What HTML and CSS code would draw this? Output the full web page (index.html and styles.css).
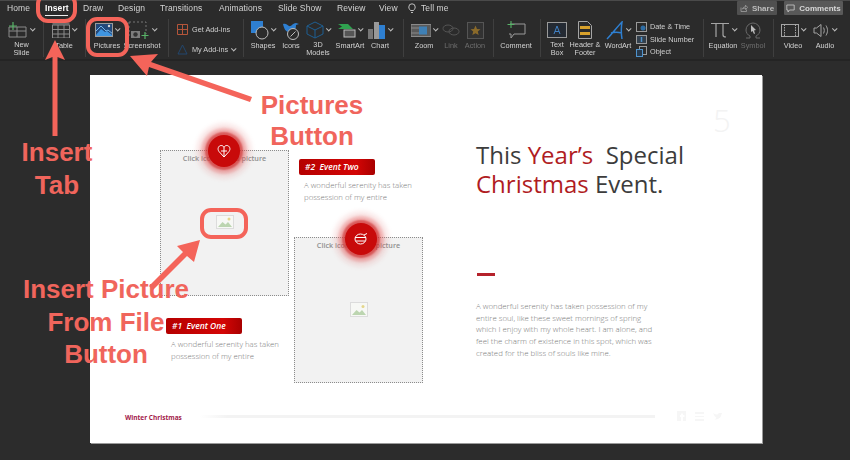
FILE: index.html
```html
<!DOCTYPE html>
<html lang="en">
<head>
<meta charset="utf-8">
<title>Insert picture in PowerPoint</title>
<link rel="stylesheet" href="styles.css">
</head>
<body>
<div class="app">
  <header class="tabs">
    <nav class="tab-list">
      <span class="tab t-home">Home</span>
      <span class="tab t-insert active">Insert</span>
      <span class="tab t-draw">Draw</span>
      <span class="tab t-design">Design</span>
      <span class="tab t-trans">Transitions</span>
      <span class="tab t-anim">Animations</span>
      <span class="tab t-show">Slide Show</span>
      <span class="tab t-review">Review</span>
      <span class="tab t-view">View</span>
      <span class="tab t-tell">
        <svg class="bulb" width="8" height="11" viewBox="0 0 8 11"><path d="M2.5 7.5C1.5 6.3.8 5.5.8 4a3.2 3.2 0 0 1 6.4 0c0 1.500-.7 2.300-1.700 3.500zM3 9.500h2" fill="none" stroke="#cfcfcf" stroke-width=".9"/></svg>
        Tell me
      </span>
    </nav>
    <div class="actions">
      <span class="action-btn share"><svg width="8" height="8" viewBox="0 0 8 8"><path d="M1 3.500v4h5.500v-2M2.500 5C3 3.500 4 2.800 5.500 2.800V1.200L7.700 3.400 5.500 5.500V4C4.300 4 3.300 4.300 2.500 5z" fill="none" stroke="#aaa" stroke-width=".7"/></svg>Share</span>
      <span class="action-btn comments"><svg width="9" height="9" viewBox="0 0 9 9"><path d="M.8 1h7.400v5H3.500L2 8V6H.8z" fill="none" stroke="#ccc" stroke-width=".8"/></svg>Comments</span>
    </div>
  </header>

  <section class="ribbon">
    <div class="group g1">
      <div class="tool w-new">
        <div class="ico"><svg width="20" height="16" viewBox="0 0 20 16"><path d="M1 5h17v10H1zM1 9h17M9 5v10" fill="none" stroke="#8b8b8b" stroke-width="1"/><path d="M5 0v8M1 4h8" stroke="#58b368" stroke-width="1.200"/></svg><i class="caret"></i></div>
        <div class="lbl">New<br>Slide</div>
      </div>
    </div>
    <div class="group g2">
      <div class="tool w-table">
        <div class="ico"><svg width="18" height="16" viewBox="0 0 18 16"><path d="M.5 3h17v13H.5zM.5 7.500h17M.5 12h17M6 3v13M12 3v13" fill="none" stroke="#8b8b8b"/><path d="M.5.500h17V3H.5z" fill="#6b6b6b"/></svg><i class="caret"></i></div>
        <div class="lbl">Table</div>
      </div>
    </div>
    <div class="group g3">
      <div class="tool w-pic">
        <div class="ico"><svg width="18" height="14" viewBox="0 0 18 14"><rect width="18" height="14" fill="#23497a"/><path d="M1 12l5-6 4 3 2-1 5 4v1H1z" fill="#3f95e0"/><path d="M0 9l6-6 5 5 2-1 5 4" fill="none" stroke="#74b6ee" stroke-width="1"/><circle cx="14" cy="3" r="1.200" fill="#d9d9d9"/><rect x=".5" y=".5" width="17" height="13" fill="none" stroke="#9a9a9a"/></svg><i class="caret"></i></div>
        <div class="lbl">Pictures</div>
      </div>
      <div class="tool w-shot">
        <div class="ico"><svg width="22" height="19" viewBox="0 0 22 19"><path d="M1 1h17v12" fill="none" stroke="#777" stroke-dasharray="2 2"/><path d="M1 1v15" stroke="#777" stroke-dasharray="2 2"/><path d="M3 10h9v7H3z" fill="#7d7d7d"/><circle cx="7.500" cy="13.500" r="2.200" fill="#333"/><path d="M17 11v7M13.500 14.500h7" stroke="#58b368" stroke-width="1.200"/></svg><i class="caret"></i></div>
        <div class="lbl">Screenshot</div>
      </div>
    </div>
    <div class="group g4">
      <div class="addins">
        <div class="addin"><svg width="11" height="11" viewBox="0 0 11 11"><path d="M.5.500h10v10H.5zM.5 5.500h10M5.500.500v10" fill="none" stroke="#b4553a"/></svg>Get Add-ins</div>
        <div class="addin"><svg width="11" height="11" viewBox="0 0 11 11"><path d="M5.500 1l4.500 9H1z" fill="none" stroke="#23476e"/></svg>My Add-ins<i class="caret small"></i></div>
      </div>
    </div>
    <div class="group g5">
      <div class="tool w-shapes">
        <div class="ico"><svg width="18" height="19" viewBox="0 0 18 19"><rect x="0" y="0" width="12" height="12" fill="#2e7fd1"/><circle cx="11" cy="12" r="6" fill="#2b2b2b" stroke="#bdbdbd"/></svg><i class="caret"></i></div>
        <div class="lbl">Shapes</div>
      </div>
      <div class="tool w-icons">
        <div class="ico"><svg width="18" height="19" viewBox="0 0 18 19"><path d="M1 3c3-1 4 1 6 2s4-3 7-3l3 1-3 1c0 5-2 7-7 7-3 0-5-3-6-8z" fill="#2e7fd1"/><circle cx="11" cy="13" r="5.500" fill="#2b2b2b" stroke="#bdbdbd"/><path d="M8.500 15.500l5-5" stroke="#bdbdbd"/></svg></div>
        <div class="lbl">Icons</div>
      </div>
      <div class="tool w-3d">
        <div class="ico"><svg width="18" height="18" viewBox="0 0 18 18"><path d="M9 1l8 4v8l-8 4-8-4V5zM1 5l8 4 8-4M9 9v8" fill="none" stroke="#1f5f92"/></svg><i class="caret"></i></div>
        <div class="lbl">3D<br>Models</div>
      </div>
      <div class="tool w-smart">
        <div class="ico"><svg width="19" height="15" viewBox="0 0 19 15"><path d="M1 1h10l5 5H1l4-2.500z" fill="#2fa24f"/><rect x="7" y="7" width="11" height="7" fill="#555" stroke="#bdbdbd"/></svg><i class="caret"></i></div>
        <div class="lbl">SmartArt</div>
      </div>
      <div class="tool w-chart">
        <div class="ico"><svg width="18" height="18" viewBox="0 0 18 18"><rect x="0" y="8" width="5" height="10" fill="#777"/><rect x="6" y="1" width="5" height="17" fill="#999"/><rect x="11" y="4" width="6" height="14" fill="#2e7fd1"/></svg><i class="caret"></i></div>
        <div class="lbl">Chart</div>
      </div>
    </div>
    <div class="group g6">
      <div class="tool w-zoom">
        <div class="ico"><svg width="20" height="13" viewBox="0 0 20 13"><rect x="0" y=".5" width="20" height="12" fill="#5a5a5a" stroke="#8a8a8a"/><rect x="8" y="2.500" width="8" height="8" fill="#3f80b5"/><path d="M0 4h8M0 9h8" stroke="#8a8a8a"/></svg><i class="caret"></i></div>
        <div class="lbl">Zoom</div>
      </div>
      <div class="tool w-link">
        <div class="ico"><svg width="18" height="12" viewBox="0 0 18 12"><ellipse cx="6" cy="4.500" rx="5" ry="3.500" fill="none" stroke="#555"/><ellipse cx="12" cy="7.500" rx="5" ry="3.500" fill="none" stroke="#555"/></svg></div>
        <div class="lbl dim">Link</div>
      </div>
      <div class="tool w-action">
        <div class="ico"><svg width="17" height="17" viewBox="0 0 17 17"><rect x=".5" y=".5" width="16" height="16" fill="#323232" stroke="#555"/><path d="M8.500 3.500l1.500 3.500 3.500.3-2.700 2.300.9 3.500-3.200-1.900-3.200 1.900.9-3.500L3.500 7.300 7 7z" fill="#8a6a2a"/></svg></div>
        <div class="lbl dim">Action</div>
      </div>
    </div>
    <div class="group g7">
      <div class="tool w-comment">
        <div class="ico"><svg width="20" height="18" viewBox="0 0 20 18"><path d="M4 3h15v10H8l-3 4v-4H3" fill="none" stroke="#9a9a9a"/><path d="M5 0v7M1.500 3.500h7" stroke="#58b368" stroke-width="1.100"/></svg></div>
        <div class="lbl">Comment</div>
      </div>
    </div>
    <div class="group g8">
      <div class="tool w-text">
        <div class="ico"><svg width="20" height="16" viewBox="0 0 20 16"><rect x=".5" y=".5" width="19" height="15" fill="#242a33" stroke="#9a9a9a"/><path d="M7 12l3-8 3 8M8 9.500h4" fill="none" stroke="#3f80c5"/></svg></div>
        <div class="lbl">Text<br>Box</div>
      </div>
      <div class="tool w-header">
        <div class="ico"><svg width="14" height="18" viewBox="0 0 14 18"><path d="M.5.500h9l4 4v13H.500z" fill="#2b2b2b" stroke="#a5a5a5"/><rect x="2" y="5" width="10" height="3" fill="#d8a12b"/><rect x="2" y="11" width="10" height="3" fill="#d8a12b"/></svg></div>
        <div class="lbl">Header &amp;<br>Footer</div>
      </div>
      <div class="tool w-word">
        <div class="ico"><svg width="18" height="19" viewBox="0 0 18 19"><path d="M1 18C6 13 11 6 16 1c-1 6-1 11 0 17M5 12c3-1 7-1 11 0" fill="none" stroke="#2e7fd1" stroke-width="1.500"/></svg><i class="caret"></i></div>
        <div class="lbl">WordArt</div>
      </div>
      <div class="stack">
        <div class="stack-row"><svg width="11" height="11" viewBox="0 0 11 11"><rect x=".5" y="1.500" width="10" height="9" fill="none" stroke="#9a9a9a"/><circle cx="7" cy="7" r="2.500" fill="#2e6da5"/></svg>Date &amp; Time</div>
        <div class="stack-row"><svg width="11" height="9" viewBox="0 0 11 9"><rect x=".5" y=".5" width="10" height="8" fill="#33404d" stroke="#9a9a9a"/><path d="M5.500 2v5" stroke="#4f93cc" stroke-width="1.500"/></svg>Slide Number</div>
        <div class="stack-row"><svg width="11" height="11" viewBox="0 0 11 11"><rect x="3.500" y=".5" width="7" height="8" fill="none" stroke="#9a9a9a"/><rect x=".5" y="3.500" width="6" height="7" fill="#27394c" stroke="#4f93cc"/></svg>Object</div>
      </div>
    </div>
    <div class="group g9">
      <div class="tool w-eq">
        <div class="ico"><svg width="20" height="16" viewBox="0 0 20 16"><path d="M1 1.500h18M6 1.500V15M13 1.500V13c0 1.500 1 2 3 2" fill="none" stroke="#a5a5a5" stroke-width="1.200"/></svg><i class="caret"></i></div>
        <div class="lbl">Equation</div>
      </div>
      <div class="tool w-sym">
        <div class="ico"><svg width="16" height="17" viewBox="0 0 16 17"><path d="M1 16h4v-2C2.500 13 1 10.500 1 8a7 7 0 0 1 14 0c0 2.500-1.500 5-4 6v2h4" fill="none" stroke="#6a6a6a"/><path d="M6 3l5 5-2 .5 1 3-1 .5-1.500-3L6 10z" fill="#bbb"/></svg></div>
        <div class="lbl dim">Symbol</div>
      </div>
    </div>
    <div class="group g10">
      <div class="tool w-video">
        <div class="ico"><svg width="18" height="13" viewBox="0 0 18 13"><rect x=".5" y=".5" width="17" height="12" fill="none" stroke="#a5a5a5"/><path d="M3.500.5v12M14.500.5v12" stroke="#a5a5a5" stroke-dasharray="1.500 1"/></svg><i class="caret"></i></div>
        <div class="lbl">Video</div>
      </div>
      <div class="tool w-audio">
        <div class="ico"><svg width="17" height="15" viewBox="0 0 17 15"><path d="M1 5v5h2.500L8 13.500v-12L3.500 5z" fill="none" stroke="#a5a5a5"/><path d="M10.500 4.500c1 2 1 4 0 6M13 2.500c2 3.500 2 6.500 0 10" fill="none" stroke="#a5a5a5"/></svg><i class="caret"></i></div>
        <div class="lbl">Audio</div>
      </div>
    </div>
  </section>

  <main class="stage">
    <article class="slide">
      <div class="ph ph-one">
        <p class="ph-text">Click icon to add picture</p>
        <svg class="ph-ico" width="18" height="14" viewBox="0 0 18 14"><rect x=".5" y=".5" width="17" height="13" fill="#f7f8f5" stroke="#dcdcdc"/><path d="M2 12l4.500-5 3 2.500L12 7l4 5z" fill="#bcd5b0"/><circle cx="13" cy="4" r="1.500" fill="#e4d68c"/></svg>
      </div>
      <div class="ph ph-two">
        <p class="ph-text">Click icon to add picture</p>
        <svg class="ph-ico" width="18" height="15" viewBox="0 0 18 15"><rect x=".5" y=".5" width="17" height="14" fill="#f7f8f5" stroke="#dcdcdc"/><path d="M2 13l4.500-5 3 2.500L12 8l4 5z" fill="#bcd5b0"/><circle cx="13" cy="4.500" r="1.500" fill="#e4d68c"/></svg>
      </div>

      <div class="badge badge-one"><svg width="16" height="16" viewBox="0 0 16 16"><path d="M8 14L3 8.500C1 6 2.500 2.500 5.200 2.500 6.700 2.500 7.600 3.300 8 4.500 8.400 3.300 9.300 2.500 10.800 2.500 13.500 2.500 15 6 13 8.500zM8 4.500V14M5 8h6" fill="none" stroke="#fff" stroke-width="1"/></svg></div>
      <div class="badge badge-two"><svg width="16" height="16" viewBox="0 0 16 16"><ellipse cx="7.500" cy="8" rx="5.500" ry="5" fill="none" stroke="#fff"/><path d="M2 6.500h11M3 10h9M11 4l3-1.500" fill="none" stroke="#fff"/></svg></div>

      <div class="event ev-two">
        <h3 class="tag">#2&nbsp; Event Two</h3>
        <p class="desc">A wonderful serenity has taken<br>possession of my entire</p>
      </div>
      <div class="event ev-one">
        <h3 class="tag">#1&nbsp; Event One</h3>
        <p class="desc">A wonderful serenity has taken<br>possession of my entire</p>
      </div>

      <div class="num">5</div>
      <h1 class="title">This <em>Year’s</em>&nbsp; Special<br><em>Christmas</em> Event.</h1>
      <div class="rule"></div>
      <p class="para">A wonderful serenity has taken possession of my<br>entire soul, like these sweet mornings of spring<br>which I enjoy with my whole heart. I am alone, and<br>feel the charm of existence in this spot, which was<br>created for the bliss of souls like mine.</p>

      <div class="foot-name">Winter Christmas</div>
      <div class="foot-line"></div>
      <div class="social">
        <svg width="9" height="10" viewBox="0 0 9 10"><path d="M0 0h9v10H6V6h1.500V4H6V2.500H4V4H3v2h1v4H0z" fill="#f6f6f6"/></svg>
        <svg width="9" height="9" viewBox="0 0 9 9"><path d="M0 0h9v2H0zM0 4h9v1H0zM0 7h9v2H0z" fill="#f6f6f6"/></svg>
        <svg width="9" height="8" viewBox="0 0 9 8"><path d="M0 1c2 1.500 3 1.500 4.500 1.500L6 1l3 0-1 3c-1 3-5 4-7 3 1.500 0 2-.5 2.500-1C2 5 1 3 0 1z" fill="#f6f6f6"/></svg>
      </div>
    </article>
  </main>

  <aside class="notes">
    <svg class="notes-art" width="850" height="460" viewBox="0 0 850 460">
      <g fill="none" stroke="#f4645a" stroke-width="4">
        <rect x="38" y="-6" width="37" height="27" rx="10"/>
        <rect x="88" y="19" width="39" height="36" rx="9"/>
        <rect x="202" y="210" width="44" height="27" rx="9"/>
      </g>
      <g fill="#f4645a" stroke="none">
        <path d="M55 40L65 60 57.500 57 57.500 136 52.500 136 52.500 57 45 60z"/>
        <path d="M130 56L158 54 151 62 252 97 250 102 149 67 147 76z"/>
        <path d="M200 240L194 262 187 256 153 290 149 286 183 252 177 246z"/>
      </g>
    </svg>
    <div class="note n-pictures">Pictures<br>Button</div>
    <div class="note n-tab">Insert<br>Tab</div>
    <div class="note n-file">Insert Picture<br>From File<br>Button</div>
  </aside>
</div>
</body>
</html>
```
FILE: styles.css
```css
* { box-sizing: border-box; }
html, body { margin: 0; height: 100%; }
body { background: #2b2b2b; font-family: "Liberation Sans", Arial, sans-serif; overflow: hidden; }
.app { position: relative; width: 850px; height: 460px; display: flex; flex-direction: column; background: #2b2b2b; }

/* tab strip */
.tabs { height: 18px; flex: none; display: flex; justify-content: space-between; border-top: 1px solid #4a4a4a; filter: blur(.25px); }
.tab-list { display: flex; padding-left: 7px; }
.tab { font-size: 8.500px; line-height: 15px; color: #d4d4d4; white-space: nowrap; font-weight: 500; position: relative; letter-spacing: .1px; }
.t-home { width: 38px; }
.t-insert { width: 38px; }
.t-draw { width: 35px; }
.t-design { width: 42px; }
.t-trans { width: 59px; }
.t-anim { width: 59px; }
.t-show { width: 59px; }
.t-review { width: 42px; }
.t-view { width: 29px; }
.t-tell { display: flex; align-items: center; gap: 5px; height: 15px; }
.active { color: #fff; font-weight: 700; }
.active::after { content: ""; position: absolute; left: 0; width: 23px; top: 14px; height: 1px; background: #eee; }
.actions { display: flex; gap: 7px; padding-right: 7px; }
.action-btn { height: 14px; display: flex; align-items: center; justify-content: center; gap: 4px; background: #595959; color: #d8d8d8; font-size: 8px; font-weight: 700; border-radius: 1px; }
.share { width: 40px; background: #505050; color: #bdbdbd; }
.comments { width: 59px; }

/* ribbon */
.ribbon { height: 43px; flex: none; display: flex; border-bottom: 2px solid #242424; filter: blur(.25px); }
.group { display: flex; height: 38px; margin-top: 1px; border-right: 1px solid #3f3f3f; flex: none; }
.g1 { width: 44px; padding-left: 5px; }
.g2 { width: 42px; padding-left: 2px; }
.g3 { width: 83px; padding-left: 4px; }
.g4 { width: 75px; padding-left: 8px; }
.g5 { width: 160px; padding-left: 4px; }
.g6 { width: 90px; padding-left: 4px; }
.g7 { width: 47px; padding-left: 4px; }
.g8 { width: 163px; padding-left: 3px; }
.g9 { width: 70px; padding-left: 4px; }
.g10 { width: 76px; padding-left: 4px; border-right: 0; }
.tool { display: flex; flex-direction: column; align-items: center; flex: none; }
.ico { height: 22px; display: flex; align-items: center; gap: 3px; }
.ico svg { flex: none; }
.lbl { margin-top: .5px; font-size: 7.300px; line-height: 8px; text-align: center; color: #d2d2d2; white-space: nowrap; font-weight: 500; }
.dim { color: #6e6e6e; }
.caret { display: block; width: 3.500px; height: 3.500px; border-right: 1px solid #bbb; border-bottom: 1px solid #bbb; transform: rotate(45deg) translate(-1px, -1px); flex: none; }
.small { display: inline-block; margin-left: 0; }
.w-new { width: 33px; }
.w-table { width: 36px; }
.w-pic { width: 34px; }
.w-shot { width: 36px; }
.w-shapes { width: 30px; }
.w-icons { width: 26px; }
.w-3d { width: 28px; }
.w-smart { width: 36px; }
.w-chart { width: 24px; }
.w-zoom { width: 32px; }
.w-link { width: 22px; }
.w-action { width: 26px; }
.w-comment { width: 36px; }
.w-text { width: 26px; }
.w-header { width: 30px; }
.w-word { width: 36px; }
.w-eq { width: 30px; }
.w-sym { width: 30px; }
.w-video { width: 30px; }
.w-audio { width: 34px; }
.addins { display: flex; flex-direction: column; gap: 9px; padding-top: 5px; }
.addin { display: flex; align-items: center; gap: 4px; font-size: 7.300px; color: #cfcfcf; white-space: nowrap; font-weight: 500; height: 11px; }
.stack { display: flex; flex-direction: column; gap: 2px; padding-top: 2px; }
.stack-row { display: flex; align-items: center; gap: 3px; height: 11px; font-size: 7.300px; color: #cfcfcf; white-space: nowrap; }

/* stage + slide: slide contents sit on a free canvas */
.stage { flex: 1; padding: 14px 88px 17px 90px; background: #2c2c2c; }
.slide { position: relative; width: 672px; height: 368px; background: #fff; box-shadow: 1px 1px 0 #9a9a9a; font-family: "Open Sans", sans-serif; }
.ph { position: absolute; background: #f2f2f2; border: 1px dotted #8c8c8c; }
.ph-one { left: 70px; top: 75px; width: 129px; height: 146px; }
.ph-two { left: 204px; top: 162px; width: 129px; height: 146px; }
.ph-text { margin: 0; padding-top: 2px; text-align: center; font-size: 7.200px; line-height: 10px; color: #8f8f8f; font-weight: 600; white-space: nowrap; }
.ph-ico { position: absolute; left: 55px; top: 64px; }
.badge { position: absolute; width: 32px; height: 32px; border-radius: 50%; display: flex; align-items: center; justify-content: center; background: #c80a0a; box-shadow: 0 0 2px 3px rgba(205, 40, 40, .65), 0 0 3px 7px rgba(225, 80, 80, .35), 0 0 4px 12px rgba(230, 130, 130, .18); }
.badge-one { left: 118px; top: 60px; }
.badge-two { left: 255px; top: 148px; }
.event { position: absolute; width: 130px; }
.ev-two { left: 209px; top: 84px; }
.ev-one { left: 76px; top: 243px; }
.tag { margin: 0; width: 76px; height: 16px; padding-left: 6px; background: linear-gradient(90deg, #b50000, #d40505 75%, #a80000); border-radius: 2px; color: #fff; font-size: 8.500px; line-height: 16px; font-style: italic; font-weight: 600; white-space: nowrap; }
.desc { margin: 5px 0 0 5px; font-size: 7.800px; line-height: 11.800px; font-weight: 300; color: #7a7a7a; white-space: nowrap; }
.num { position: absolute; left: 623px; top: 26px; font-size: 31px; line-height: 38px; font-weight: 300; color: #f3f3f3; }
.title { position: absolute; left: 386px; top: 65px; margin: 0; font-size: 24px; line-height: 29px; font-weight: 400; color: #3c3c3c; white-space: nowrap; }
.title em { font-style: normal; color: #b01c22; }
.rule { position: absolute; left: 387px; top: 198px; width: 18px; height: 3px; background: #b5222b; }
.para { position: absolute; left: 386px; top: 226px; margin: 0; font-size: 7.850px; line-height: 11.700px; font-weight: 300; color: #7a7a7a; white-space: nowrap; }
.foot-name { position: absolute; left: 35px; top: 338px; font-size: 6.500px; line-height: 10px; font-weight: 700; color: #a3204a; white-space: nowrap; }
.foot-line { position: absolute; left: 110px; top: 340px; width: 455px; height: 3px; background: linear-gradient(90deg, #fff, #f3f3f3 6%, #f3f3f3); }
.social { position: absolute; left: 587px; top: 336px; display: flex; gap: 9px; align-items: center; }

/* tutorial annotations laid over the screenshot */
.notes { position: absolute; inset: 0; pointer-events: none; }
.notes-art { position: absolute; left: 0; top: 0; }
.note { position: absolute; font-family: "Liberation Sans", Arial, sans-serif; font-weight: 700; font-size: 26px; line-height: 32.500px; color: #f0655c; text-align: center; white-space: nowrap; }
.n-pictures { left: 232px; width: 160px; top: 90px; line-height: 31px; }
.n-tab { left: 0; width: 114px; top: 136px; }
.n-file { left: 0; width: 212px; top: 273px; }
```
